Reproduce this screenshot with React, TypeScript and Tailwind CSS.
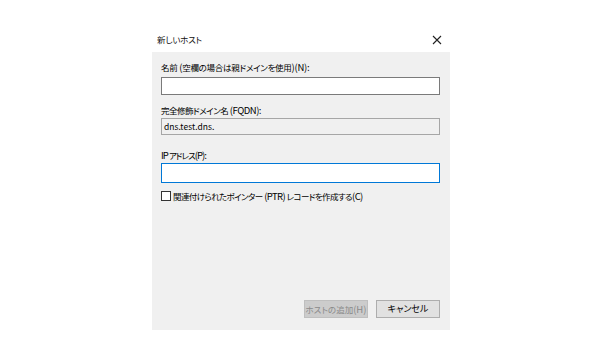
import React from "react";

const font = "font-['Yu_Gothic_UI','Noto_Sans_CJK_JP',sans-serif] [font-feature-settings:'palt']";

function A({ children }: { children: React.ReactNode }) {
  return <span className="text-[9.5px]">{children}</span>;
}

export default function App() {
  return (
    <div className={`w-[600px] h-[359px] bg-white ${font}`}>
      <div className="pt-[27px] pl-[152px]">
        <div className="w-[298px]">
          <div className="h-[25px] flex items-center justify-between pl-[5px] pr-[8px] bg-white">
            <span className="text-[8.5px] text-[#111] leading-none tracking-[-0.2px]">新しいホスト</span>
            <svg width="10" height="10" viewBox="0 0 10 10" className="text-[#222]">
              <path d="M1 1 L9 9 M9 1 L1 9" stroke="currentColor" strokeWidth="1.1" fill="none" />
            </svg>
          </div>
          <div className="h-[278px] bg-[#f0f0f0] pl-[9px] pr-[10px] flex flex-col">
            <div className="mt-[9px] h-[12px] text-[8.5px] leading-[12px] tracking-[-0.28px] text-black whitespace-nowrap">
              名前<A> (</A>空欄の場合は親ドメインを使用<A>)(N):</A>
            </div>
            <div className="mt-[4px] h-[18px] bg-white border border-[#7a7a7a]"></div>
            <div className="mt-[9px] h-[12px] text-[8.5px] leading-[12px] tracking-[-0.5px] text-black whitespace-nowrap">
              完全修飾ドメイン名<A> (FQDN):</A>
            </div>
            <div className="mt-[2px] h-[17px] bg-[#f0f0f0] border border-[#a6a6a6] flex items-center pl-[2px] text-[8.5px] text-black">dns.test.dns.</div>
            <div className="mt-[14px] h-[12px] text-[8.5px] leading-[12px] tracking-[-1px] text-black whitespace-nowrap">
              <A>IP </A>アドレス<A>(P):</A>
            </div>
            <div className="mt-[2px] h-[20px] bg-white border border-[#0078d7]"></div>
            <div className="mt-[7px] h-[12px] flex items-center gap-[2px]">
              <div className="w-[10px] h-[10px] border border-[#333] bg-white"></div>
              <span className="text-[8.5px] leading-[12px] tracking-[-0.6px] text-black whitespace-nowrap">
                関連付けられたポインター<A> (PTR) </A>レコードを作成する<A>(C)</A>
              </span>
            </div>
            <div className="flex-1"></div>
            <div className="flex justify-end gap-[8px] mb-[12px]">
              <div className="w-[64px] h-[18px] bg-[#cccccc] border border-[#bfbfbf] flex items-center justify-center text-[8.5px] text-[#8a8a8a] whitespace-nowrap">
                ホストの追加<span className="text-[9.5px]">(H)</span>
              </div>
              <div className="w-[64px] h-[18px] bg-[#e1e1e1] border border-[#adadad] flex items-center justify-center text-[9px] text-black whitespace-nowrap">
                キャンセル
              </div>
            </div>
          </div>
        </div>
      </div>
    </div>
  );
}
